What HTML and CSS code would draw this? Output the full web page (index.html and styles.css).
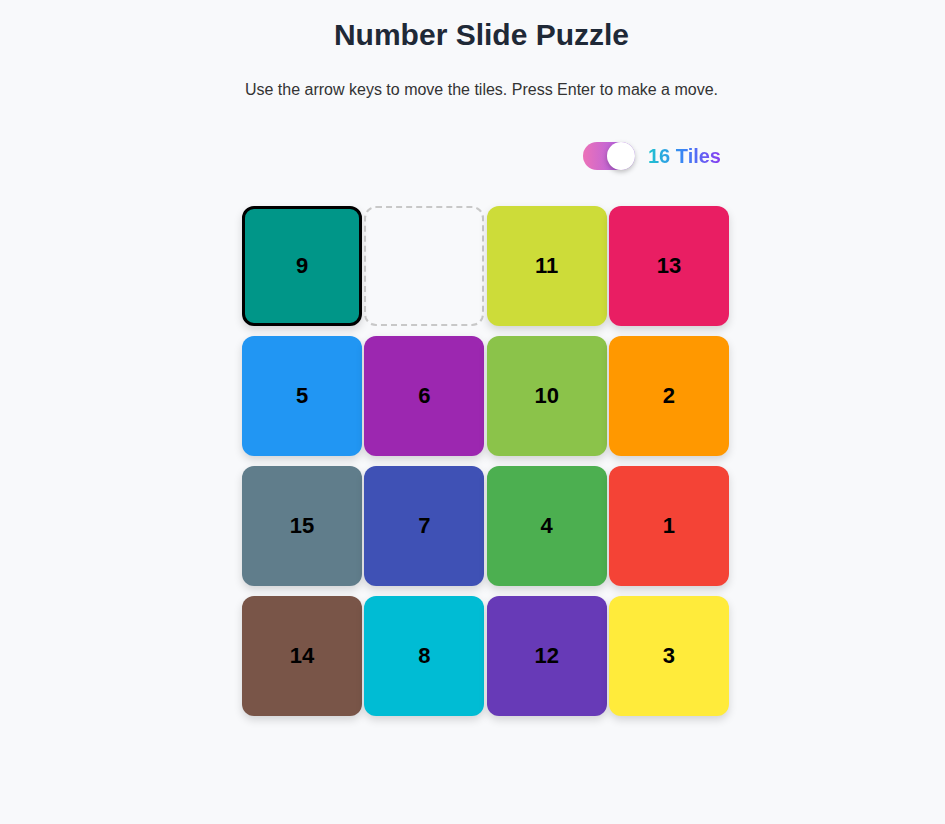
FILE: index.html
```html
<!DOCTYPE html>
<html>
<head>
<meta charset="utf-8">
<link rel="stylesheet" href="styles.css">
</head>
<body>
<main class="page">
  <h1 class="title">Number Slide Puzzle</h1>
  <p class="subtitle">Use the arrow keys to move the tiles. Press Enter to make a move.</p>
  <div class="controls">
    <div class="toggle"><span class="knob"></span></div>
    <span class="count">16 Tiles</span>
  </div>
  <div class="board">
    <div class="tile selected c-teal">9</div>
    <div class="tile empty"></div>
    <div class="tile c-lime">11</div>
    <div class="tile c-pink">13</div>
    <div class="tile c-blue">5</div>
    <div class="tile c-purple">6</div>
    <div class="tile c-lgreen">10</div>
    <div class="tile c-orange">2</div>
    <div class="tile c-bgrey">15</div>
    <div class="tile c-indigo">7</div>
    <div class="tile c-green">4</div>
    <div class="tile c-red">1</div>
    <div class="tile c-brown">14</div>
    <div class="tile c-cyan">8</div>
    <div class="tile c-dpurple">12</div>
    <div class="tile c-yellow">3</div>
  </div>
</main>
</body>
</html>
```
FILE: styles.css
```css
html, body {
  margin: 0;
  padding: 0;
  background: #f8f9fb;
  font-family: "Liberation Sans", Arial, sans-serif;
}
.page {
  display: flex;
  flex-direction: column;
  align-items: center;
  padding-left: 18px;
  padding-top: 17px;
  padding-bottom: 40px;
}
.title {
  margin: 0;
  font-size: 30px;
  line-height: 36px;
  font-weight: 700;
  color: #1f2937;
}
.subtitle {
  margin: 27px 0 0;
  font-size: 16px;
  line-height: 20px;
  color: #333;
}
.controls {
  align-self: center;
  width: 487px;
  margin-left: 8px;
  margin-top: 42px;
  display: flex;
  justify-content: flex-end;
  align-items: center;
  gap: 13px;
  padding-right: 8px;
  box-sizing: border-box;
}
.toggle {
  width: 52px;
  height: 28px;
  border-radius: 14px;
  background: linear-gradient(90deg, #ec72b8, #9b59f0);
  position: relative;
}
.knob {
  position: absolute;
  right: 0;
  top: 0;
  width: 28px;
  height: 28px;
  border-radius: 50%;
  background: #fff;
  box-shadow: 0 2px 5px rgba(0,0,0,0.25);
}
.count {
  font-size: 20px;
  font-weight: 700;
  line-height: 24px;
  background: linear-gradient(90deg, #1fc3cf 0%, #3b82f6 50%, #8b3cf0 100%);
  -webkit-background-clip: text;
  background-clip: text;
  color: transparent;
}
.board {
  margin-top: 36px;
  margin-left: 8px;
  width: 487px;
  display: flex;
  flex-wrap: wrap;
  justify-content: space-between;
  row-gap: 10px;
}
.tile {
  width: 120px;
  height: 120px;
  box-sizing: border-box;
  border-radius: 12px;
  display: flex;
  align-items: center;
  justify-content: center;
  font-size: 22px;
  font-weight: 700;
  color: #000;
  box-shadow: 0 4px 8px rgba(0,0,0,0.15);
}
.tile.selected { border: 3px solid #000; }
.tile.empty {
  border: 2px dashed #c8c8c8;
  background: transparent;
  box-shadow: none;
}
.c-teal { background: #009688; }
.c-lime { background: #cddc39; }
.c-pink { background: #e91e63; }
.c-blue { background: #2196f3; }
.c-purple { background: #9c27b0; }
.c-lgreen { background: #8bc34a; }
.c-orange { background: #ff9800; }
.c-bgrey { background: #607d8b; }
.c-indigo { background: #3f51b5; }
.c-green { background: #4caf50; }
.c-red { background: #f44336; }
.c-brown { background: #795548; }
.c-cyan { background: #00bcd4; }
.c-dpurple { background: #673ab7; }
.c-yellow { background: #ffeb3b; }
```
